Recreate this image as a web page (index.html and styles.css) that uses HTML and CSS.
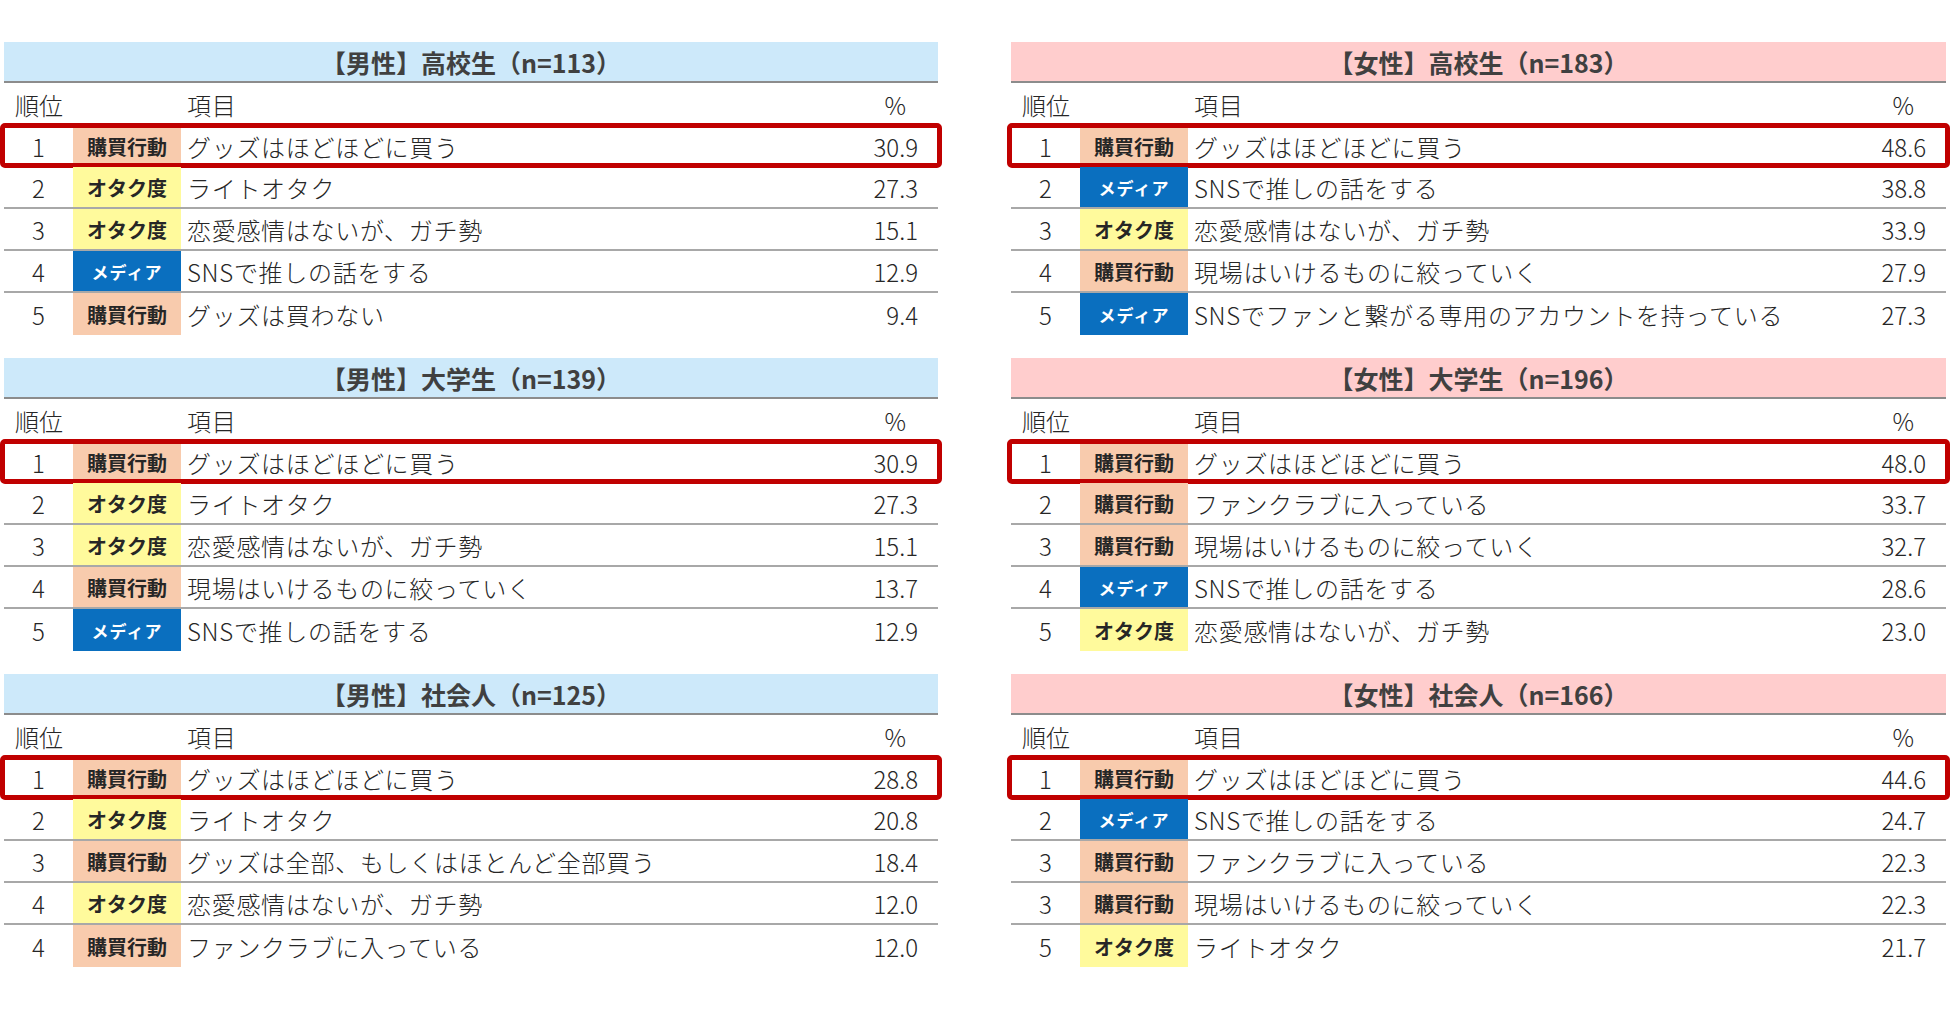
FILE: index.html
```html
<!DOCTYPE html>
<html lang="ja">
<head>
<meta charset="utf-8">
<title>ランキング</title>
<link rel="stylesheet" href="styles.css">
</head>
<body>
<div class="page">

  <section class="tbl male">
    <div class="band">【男性】高校生（n=113）</div>
    <div class="row head"><span class="rank">順位</span><span></span><span class="item">項目</span><span class="pct">%</span></div>
    <div class="row top"><span class="rank">1</span><span class="badge buy">購買行動</span><span class="item">グッズはほどほどに買う</span><span class="pct">30.9</span><i class="hl"></i></div>
    <div class="row"><span class="rank">2</span><span class="badge ota">オタク度</span><span class="item">ライトオタク</span><span class="pct">27.3</span></div>
    <div class="row"><span class="rank">3</span><span class="badge ota">オタク度</span><span class="item">恋愛感情はないが、ガチ勢</span><span class="pct">15.1</span></div>
    <div class="row"><span class="rank">4</span><span class="badge med">メディア</span><span class="item">SNSで推しの話をする</span><span class="pct">12.9</span></div>
    <div class="row"><span class="rank">5</span><span class="badge buy">購買行動</span><span class="item">グッズは買わない</span><span class="pct">9.4</span></div>
  </section>

  <section class="tbl female">
    <div class="band">【女性】高校生（n=183）</div>
    <div class="row head"><span class="rank">順位</span><span></span><span class="item">項目</span><span class="pct">%</span></div>
    <div class="row top"><span class="rank">1</span><span class="badge buy">購買行動</span><span class="item">グッズはほどほどに買う</span><span class="pct">48.6</span><i class="hl"></i></div>
    <div class="row"><span class="rank">2</span><span class="badge med">メディア</span><span class="item">SNSで推しの話をする</span><span class="pct">38.8</span></div>
    <div class="row"><span class="rank">3</span><span class="badge ota">オタク度</span><span class="item">恋愛感情はないが、ガチ勢</span><span class="pct">33.9</span></div>
    <div class="row"><span class="rank">4</span><span class="badge buy">購買行動</span><span class="item">現場はいけるものに絞っていく</span><span class="pct">27.9</span></div>
    <div class="row"><span class="rank">5</span><span class="badge med">メディア</span><span class="item">SNSでファンと繋がる専用のアカウントを持っている</span><span class="pct">27.3</span></div>
  </section>

  <section class="tbl male">
    <div class="band">【男性】大学生（n=139）</div>
    <div class="row head"><span class="rank">順位</span><span></span><span class="item">項目</span><span class="pct">%</span></div>
    <div class="row top"><span class="rank">1</span><span class="badge buy">購買行動</span><span class="item">グッズはほどほどに買う</span><span class="pct">30.9</span><i class="hl"></i></div>
    <div class="row"><span class="rank">2</span><span class="badge ota">オタク度</span><span class="item">ライトオタク</span><span class="pct">27.3</span></div>
    <div class="row"><span class="rank">3</span><span class="badge ota">オタク度</span><span class="item">恋愛感情はないが、ガチ勢</span><span class="pct">15.1</span></div>
    <div class="row"><span class="rank">4</span><span class="badge buy">購買行動</span><span class="item">現場はいけるものに絞っていく</span><span class="pct">13.7</span></div>
    <div class="row"><span class="rank">5</span><span class="badge med">メディア</span><span class="item">SNSで推しの話をする</span><span class="pct">12.9</span></div>
  </section>

  <section class="tbl female">
    <div class="band">【女性】大学生（n=196）</div>
    <div class="row head"><span class="rank">順位</span><span></span><span class="item">項目</span><span class="pct">%</span></div>
    <div class="row top"><span class="rank">1</span><span class="badge buy">購買行動</span><span class="item">グッズはほどほどに買う</span><span class="pct">48.0</span><i class="hl"></i></div>
    <div class="row"><span class="rank">2</span><span class="badge buy">購買行動</span><span class="item">ファンクラブに入っている</span><span class="pct">33.7</span></div>
    <div class="row"><span class="rank">3</span><span class="badge buy">購買行動</span><span class="item">現場はいけるものに絞っていく</span><span class="pct">32.7</span></div>
    <div class="row"><span class="rank">4</span><span class="badge med">メディア</span><span class="item">SNSで推しの話をする</span><span class="pct">28.6</span></div>
    <div class="row"><span class="rank">5</span><span class="badge ota">オタク度</span><span class="item">恋愛感情はないが、ガチ勢</span><span class="pct">23.0</span></div>
  </section>

  <section class="tbl male">
    <div class="band">【男性】社会人（n=125）</div>
    <div class="row head"><span class="rank">順位</span><span></span><span class="item">項目</span><span class="pct">%</span></div>
    <div class="row top"><span class="rank">1</span><span class="badge buy">購買行動</span><span class="item">グッズはほどほどに買う</span><span class="pct">28.8</span><i class="hl"></i></div>
    <div class="row"><span class="rank">2</span><span class="badge ota">オタク度</span><span class="item">ライトオタク</span><span class="pct">20.8</span></div>
    <div class="row"><span class="rank">3</span><span class="badge buy">購買行動</span><span class="item">グッズは全部、もしくはほとんど全部買う</span><span class="pct">18.4</span></div>
    <div class="row"><span class="rank">4</span><span class="badge ota">オタク度</span><span class="item">恋愛感情はないが、ガチ勢</span><span class="pct">12.0</span></div>
    <div class="row"><span class="rank">4</span><span class="badge buy">購買行動</span><span class="item">ファンクラブに入っている</span><span class="pct">12.0</span></div>
  </section>

  <section class="tbl female">
    <div class="band">【女性】社会人（n=166）</div>
    <div class="row head"><span class="rank">順位</span><span></span><span class="item">項目</span><span class="pct">%</span></div>
    <div class="row top"><span class="rank">1</span><span class="badge buy">購買行動</span><span class="item">グッズはほどほどに買う</span><span class="pct">44.6</span><i class="hl"></i></div>
    <div class="row"><span class="rank">2</span><span class="badge med">メディア</span><span class="item">SNSで推しの話をする</span><span class="pct">24.7</span></div>
    <div class="row"><span class="rank">3</span><span class="badge buy">購買行動</span><span class="item">ファンクラブに入っている</span><span class="pct">22.3</span></div>
    <div class="row"><span class="rank">3</span><span class="badge buy">購買行動</span><span class="item">現場はいけるものに絞っていく</span><span class="pct">22.3</span></div>
    <div class="row"><span class="rank">5</span><span class="badge ota">オタク度</span><span class="item">ライトオタク</span><span class="pct">21.7</span></div>
  </section>

</div>
</body>
</html>
```

FILE: styles.css
```css
* { box-sizing: border-box; }

html, body {
  margin: 0;
  background: #ffffff;
}

body {
  font-family: "Noto Sans CJK JP", "Noto Sans", sans-serif;
  color: #262626;
}

.page {
  display: grid;
  grid-template-columns: 934px 935px;
  column-gap: 73px;
  row-gap: 23px;
  padding: 42px 0 0 4px;
}

.tbl {
  display: flex;
  flex-direction: column;
}

.band {
  height: 41px;
  border-bottom: 2px solid #8c8c8c;
  display: flex;
  align-items: center;
  justify-content: center;
  font-size: 25px;
  font-weight: 700;
  color: #404040;
  padding-top: 1px;
}

.male .band { background: #cde9fa; }
.female .band { background: #ffcdcd; }

.row {
  position: relative;
  height: 42px;
  display: grid;
  grid-template-columns: 69px 108px 1fr auto;
  align-items: stretch;
  font-size: 24px;
  font-weight: 300;
}

.row:nth-child(4),
.row:nth-child(5),
.row:nth-child(6) {
  border-bottom: 2px solid #a8a8a8;
}

.row > span {
  display: flex;
  align-items: center;
}

.rank {
  justify-content: center;
}

.head .rank {
  justify-content: flex-start;
  padding-left: 11px;
}

.item {
  padding-left: 6px;
  letter-spacing: 0.7px;
  white-space: nowrap;
}

.pct {
  justify-content: flex-end;
  padding-right: 20px;
}

.head .pct {
  padding-right: 32px;
}

.badge {
  justify-content: center;
  font-size: 20px;
  font-weight: 700;
  color: #262626;
}

.badge.buy { background: #f8cbad; }
.badge.ota { background: #fffa9c; }
.badge.med {
  background: #0a6fbf;
  color: #ffffff;
  font-size: 17px;
  letter-spacing: 1px;
}

.hl {
  position: absolute;
  left: -4px;
  right: -4px;
  top: -2px;
  bottom: -1px;
  border: 5px solid #c00000;
  border-radius: 5px;
  pointer-events: none;
}
```
